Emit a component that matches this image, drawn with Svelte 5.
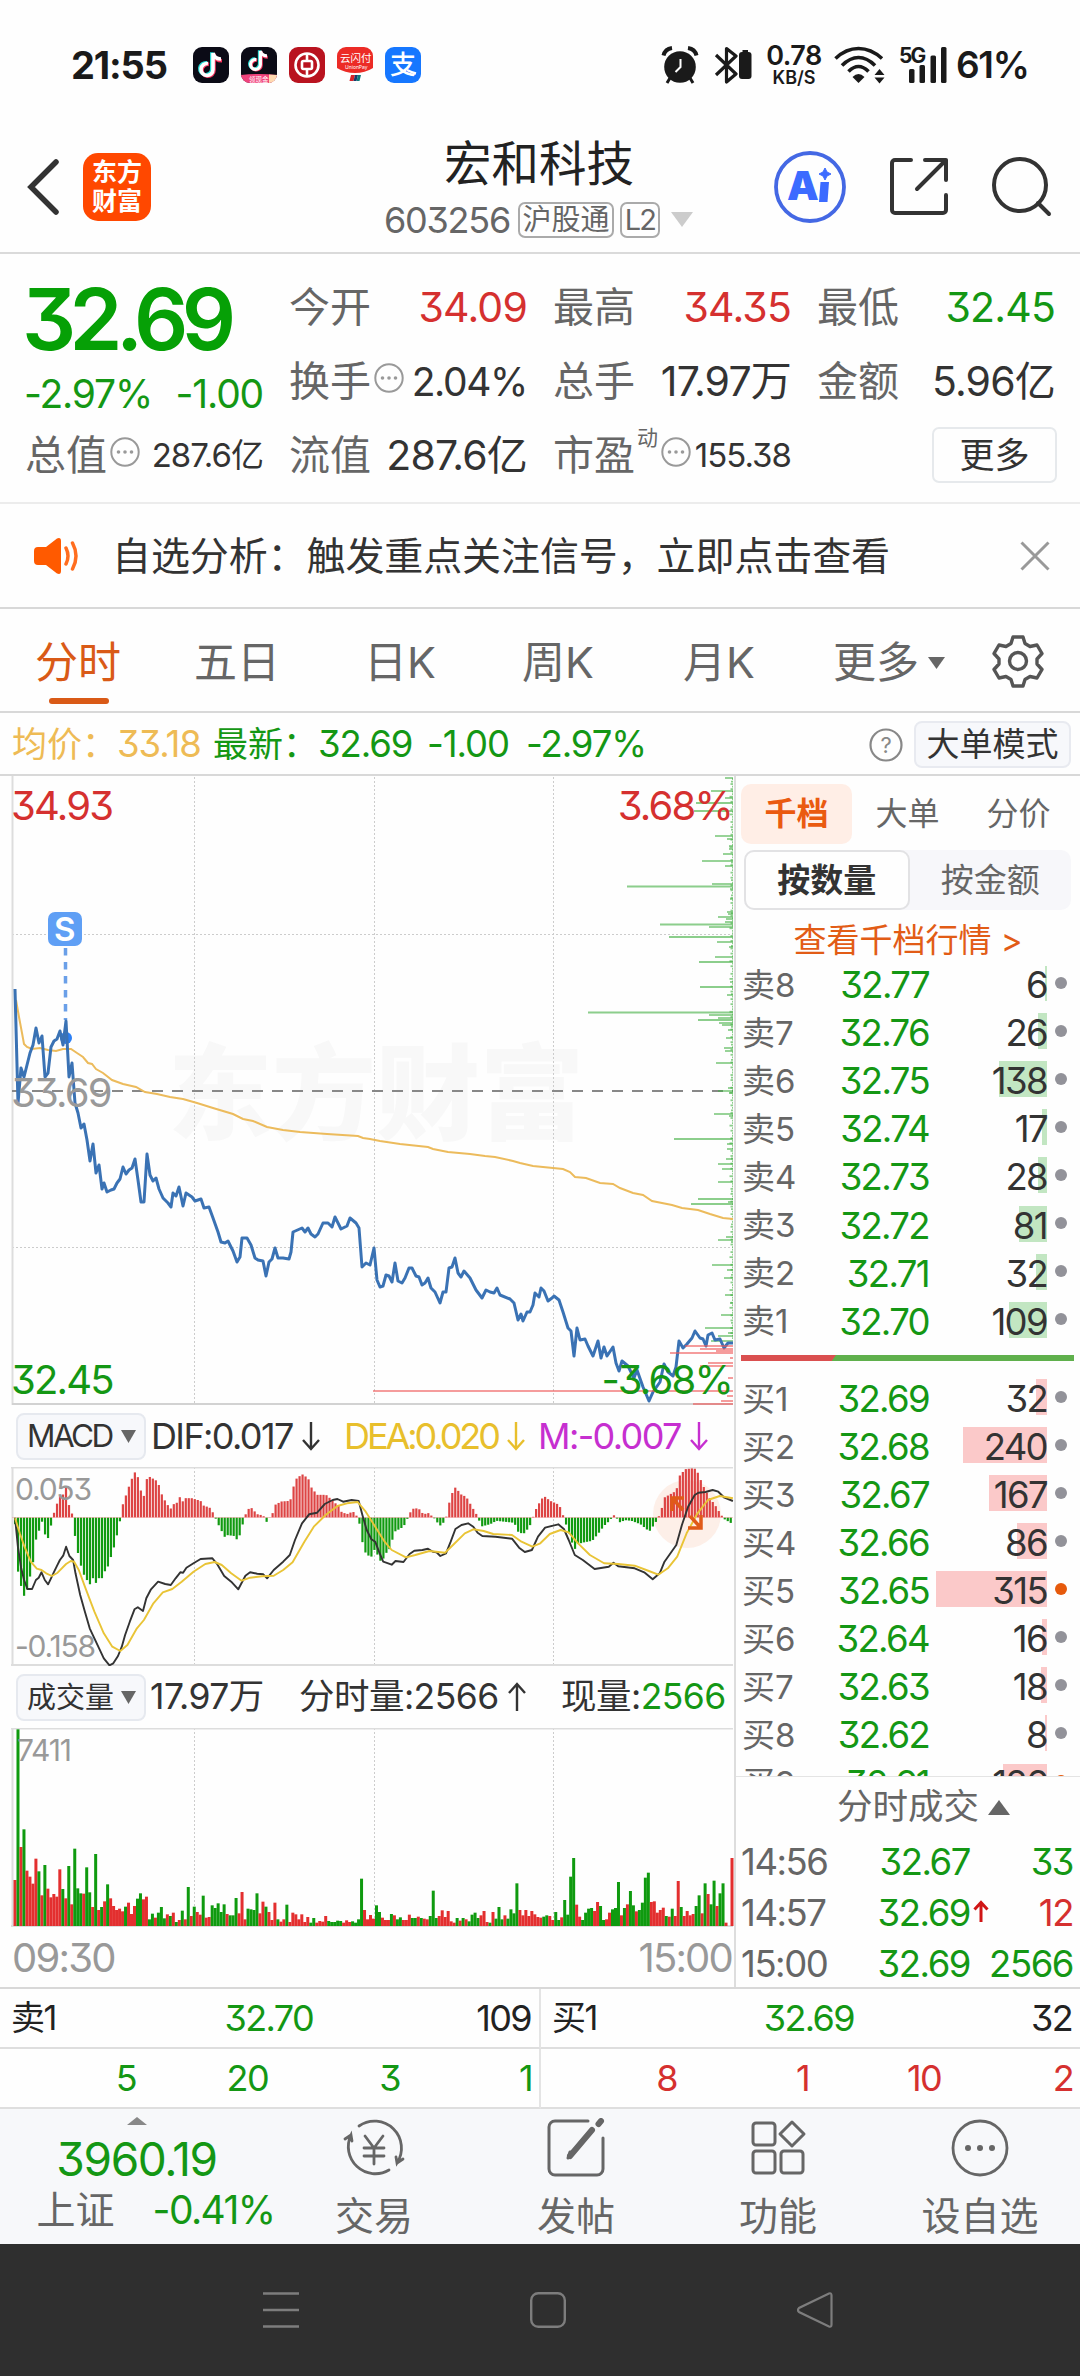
<script>
const quotes = [
    { label: "今开", value: "34.09", tone: "red" },
    { label: "最高", value: "34.35", tone: "red" },
    { label: "最低", value: "32.45", tone: "green" },
    { label: "换手", value: "2.04%", info: true },
    { label: "总手", value: "17.97万" },
    { label: "金额", value: "5.96亿" },
];

const tabs = ["分时", "五日", "日K", "周K", "月K"];

const sells = [
    ["卖8", "32.77", 6, 2],
    ["卖7", "32.76", 26, 9],
    ["卖6", "32.75", 138, 48],
    ["卖5", "32.74", 17, 5],
    ["卖4", "32.73", 28, 9],
    ["卖3", "32.72", 81, 28],
    ["卖2", "32.71", 32, 11],
    ["卖1", "32.70", 109, 38],
];
const buys = [
    ["买1", "32.69", 32, 11],
    ["买2", "32.68", 240, 84],
    ["买3", "32.67", 167, 58],
    ["买4", "32.66", 86, 30],
    ["买5", "32.65", 315, 111],
    ["买6", "32.64", 16, 5],
    ["买7", "32.63", 18, 6],
    ["买8", "32.62", 8, 2],
    ["买9", "32.61", 126, 44],
];
const hot = ["买5", "买9"];

const trades = [
    { time: "14:56", price: "32.67", vol: 33, tone: "green" },
    { time: "14:57", price: "32.69", vol: 12, tone: "red", up: true },
    { time: "15:00", price: "32.69", vol: 2566, tone: "green" },
];

// price and average lines, y runs from 776 (34.93) to 1404 (32.45)
const price = "15,989 18,1103 21,1068 24,1077 27,1065 30,1053 33,1045 36,1028 39,1043 42,1036 45,1077 48,1073 51,1047 54,1041 57,1039 60,1031 63,1045 66,1021 69,1077 72,1063 75,1103 78,1113 81,1128 84,1124 87,1140 90,1161 93,1144 96,1173 99,1165 102,1189 104,1183 107,1192 111,1190 114,1189 117,1183 120,1179 123,1167 126,1174 129,1170 132,1168 135,1159 138,1180 141,1202 144,1202 147,1154 150,1175 153,1181 156,1178 159,1189 163,1198 168,1203 171,1207 173,1193 176,1196 179,1187 183,1206 186,1193 192,1197 195,1201 201,1199 204,1208 209,1207 213,1218 218,1232 221,1242 225,1243 228,1241 233,1251 237,1262 240,1257 242,1238 247,1238 251,1245 255,1258 258,1260 263,1261 266,1276 269,1262 272,1259 275,1248 278,1258 283,1258 289,1259 291,1252 293,1232 302,1228 305,1232 308,1228 311,1234 315,1237 318,1234 323,1223 328,1223 332,1227 335,1217 341,1229 347,1226 350,1218 356,1223 359,1228 362,1267 366,1263 370,1265 374,1248 377,1280 380,1287 383,1286 386,1275 389,1276 392,1282 395,1263 398,1281 402,1283 405,1278 409,1268 412,1268 416,1276 419,1277 422,1285 425,1283 428,1278 431,1288 435,1292 440,1303 443,1292 446,1292 449,1268 452,1267 455,1258 458,1273 461,1277 464,1271 470,1278 476,1290 482,1298 486,1290 490,1292 494,1293 497,1288 500,1295 510,1299 514,1303 518,1320 521,1314 523,1321 527,1312 530,1312 533,1305 535,1293 539,1297 541,1288 544,1291 548,1301 552,1298 554,1296 559,1300 563,1312 568,1328 571,1331 574,1356 577,1328 580,1340 585,1339 588,1346 593,1356 598,1341 601,1358 604,1347 607,1356 613,1347 616,1363 619,1371 622,1361 628,1366 634,1378 637,1370 643,1387 649,1401 653,1392 660,1382 664,1364 668,1372 673,1376 676,1367 679,1341 683,1348 687,1344 692,1338 695,1331 700,1338 703,1339 706,1346 708,1335 712,1333 715,1340 720,1339 724,1348 728,1343 733,1343";
const average = "16,1000 19,1017 22,1033 24,1044 27,1047 32,1049 40,1048 48,1050 56,1051 63,1049 71,1049 77,1053 83,1057 88,1063 92,1064 96,1069 103,1073 112,1080 123,1084 136,1087 145,1092 157,1094 170,1097 183,1099 197,1103 213,1108 233,1114 243,1119 253,1121 267,1127 283,1130 300,1132 327,1134 358,1136 363,1138 370,1139 380,1141 400,1144 428,1147 433,1149 448,1152 470,1154 485,1156 495,1157 513,1161 520,1163 533,1166 563,1169 570,1172 575,1177 586,1178 600,1183 613,1184 620,1188 633,1193 643,1195 652,1201 672,1205 682,1208 698,1210 710,1214 723,1218 733,1219";

// resting orders on the right edge: [y, length]
const asks = [[778,8],[791,22],[798,8],[803,37],[811,39],[836,18],[839,6],[846,4],[849,4],[854,10],[861,31],[866,8],[884,21],[886.5,106],[889,3],[899,3],[912,6],[914,5],[917,15],[919,7],[922,8],[924.5,73],[927,24],[937,64],[942,16],[947,4],[957,18],[962,34],[982,3],[987,33],[995,6],[1012.5,145],[1015,24],[1018,15],[1020,35],[1023,14],[1025,11],[1030,5],[1038,7],[1048,9],[1051,8],[1063,17],[1088,5],[1091,15],[1093,4],[1114,19],[1116,4],[1139,59],[1144,6],[1149,6],[1159,7],[1164,15],[1169,11],[1182,15],[1199,35],[1202,5],[1204,42],[1237,7],[1240,15],[1265,21],[1270,6],[1278,9],[1295,8],[1303,3],[1315,12],[1328,28],[1333,5],[1336,15],[1341,22]];
const bids = [[1346,48],[1349,33],[1351,17],[1353,63],[1358,3],[1363,25],[1366,33],[1378,5],[1391,360],[1396,6],[1401,12],[1404,40]];
const small = Array.from({length: 222}, (_, i) => [779 + i * 2.53, 1 + (i * 7 % 5 > 2 ? 1.5 : 0) + (i * 11 % 13 > 10 ? 1 : 0)]);

// the MACD series sit on a finer grid than the svg
const sx = x => x / 2.119;
const sy = y => y / 3 - 67;
const line = s => s.split(" ").map(p => p.split(",").map(Number)).map(([x, y]) => `${sx(x).toFixed(1)},${sy(y).toFixed(1)}`).join(" ");

const dif = line("32,355 38,440 45,505 51,540 58,567 68,567 76,540 82,533 88,517 95,540 102,553 108,535 114,517 120,500 127,480 134,467 140,440 147,468 155,480 160,520 170,585 180,635 190,685 200,715 210,745 220,775 232,796 240,790 250,768 258,740 265,705 275,665 285,628 292,622 303,633 310,595 320,568 335,545 350,552 362,555 372,535 382,517 388,518 395,503 410,490 425,477 450,475 460,492 475,528 490,545 505,568 520,527 530,517 545,521 558,523 566,535 580,510 600,485 614,465 625,420 640,370 655,343 672,338 688,312 705,300 715,297 727,305 745,300 760,303 768,345 777,390 787,418 795,425 803,455 812,485 830,494 838,483 855,486 868,462 878,452 895,450 907,446 917,455 925,457 933,468 945,460 955,425 965,387 978,375 992,370 1003,380 1012,398 1022,408 1050,410 1085,416 1100,443 1112,456 1127,450 1140,410 1155,383 1183,373 1195,387 1205,420 1218,465 1235,480 1260,507 1290,500 1300,488 1310,499 1345,505 1365,517 1383,538 1398,520 1408,485 1433,435 1445,375 1458,320 1472,285 1480,278 1495,276 1510,270 1522,275 1535,293 1553,303");
const dea = line("32,355 42,400 52,440 65,485 78,506 88,510 98,520 110,528 122,518 140,492 150,483 157,485 167,510 180,560 200,635 220,700 238,740 255,753 270,735 290,685 305,660 325,610 345,577 365,567 385,545 410,515 435,492 455,486 470,495 490,520 512,542 530,533 555,529 580,527 600,510 620,487 645,425 665,380 690,345 715,318 735,310 758,306 775,335 795,380 815,425 830,450 860,472 880,465 910,453 943,458 960,435 985,400 1003,388 1025,393 1045,402 1085,405 1105,425 1128,440 1145,430 1165,402 1188,390 1205,397 1225,430 1250,465 1280,490 1310,492 1345,497 1375,513 1395,524 1415,505 1435,470 1455,400 1478,340 1500,300 1525,288 1553,295");

const macd = [[32,-20],[38,-160],[44,-202],[51,-235],[57,-218],[63,-182],[70,-135],[76,-68],[82,-43],[89,-12],[95,-50],[102,-62],[108,-25],[114,12],[120,38],[127,68],[133,66],[139,100],[146,38],[152,18],[158,-48],[165,-105],[171,-142],[178,-172],[190,-202],[197,-182],[203,-197],[209,-182],[216,-182],[222,-162],[228,-150],[241,-92],[248,-52],[254,-12],[260,38],[273,92],[285,137],[292,122],[298,83],[304,58],[311,115],[317,122],[330,112],[336,100],[342,72],[349,52],[361,25],[368,40],[374,42],[380,63],[387,48],[393,58],[406,58],[425,50],[431,36],[444,30],[450,18],[456,0],[463,-22],[476,-58],[482,-53],[495,-55],[501,-66],[507,-58],[514,-22],[520,8],[526,25],[532,30],[545,10],[558,6],[564,-15],[570,-3],[577,10],[583,38],[596,48],[615,50],[621,88],[627,115],[640,130],[653,118],[659,92],[672,68],[691,68],[704,52],[710,43],[716,40],[722,18],[735,10],[748,18],[754,8],[760,-3],[767,-68],[773,-103],[786,-122],[792,-95],[798,-105],[805,-130],[811,-128],[817,-108],[824,-100],[837,-42],[855,-28],[862,-8],[868,12],[874,26],[887,28],[893,15],[900,10],[906,15],[919,0],[932,-25],[944,-10],[950,35],[957,68],[963,92],[970,82],[976,70],[988,62],[1001,30],[1012,4],[1020,-27],[1039,-20],[1052,-10],[1090,-16],[1097,-42],[1109,-50],[1122,-28],[1128,-5],[1134,20],[1147,55],[1154,63],[1166,50],[1185,38],[1192,12],[1198,-15],[1210,-65],[1217,-98],[1224,-80],[1236,-75],[1255,-70],[1268,-48],[1280,-25],[1293,-8],[1300,8],[1306,0],[1312,-15],[1325,-8],[1338,-10],[1357,-20],[1376,-42],[1388,-18],[1395,0],[1401,20],[1408,60],[1433,80],[1440,125],[1452,145],[1471,148],[1477,140],[1490,95],[1503,60],[1515,38],[1528,8],[1535,-5],[1553,-20]];

function at(x) {
    let k = macd.findIndex(p => p[0] >= x);
    if (k < 1) return macd[0][1];
    const [x0, y0] = macd[k-1];
    const [x1, y1] = macd[k];
    return y0 + (y1-y0) * (x-x0) / (x1-x0);
}
const bars = Array.from({length: 240}, (_, i) => 32 + i * 6.345).map(x => ({x: sx(x), h: at(x) / 3}));

// one entry a minute: colour and height
const volume = "r138 g590 r237 g290 r166 r148 r127 r202 g164 r92 g183 r112 r86 r96 r88 r170 g111 r83 g180 r65 g232 g113 g98 r97 g176 g101 r57 g216 r48 g57 r74 g125 r83 r60 r48 r52 r44 g58 r70 r36 r60 g82 g98 r80 r88 g20 g37 r25 g40 g57 g23 r35 g30 r40 g12 r18 g46 r20 g117 r30 g58 r42 r34 g91 r25 r27 g62 g54 g68 g42 g65 r36 g32 g32 g84 r38 r102 r20 g52 g50 g48 g98 r38 r73 g58 r42 r18 r70 g20 r13 r20 g64 r12 r40 r35 r20 r35 r12 r27 g10 g24 r10 r15 r13 r30 g15 g12 g12 g16 g15 r10 r17 r12 g14 g10 g20 g142 r48 r20 r33 r22 g62 g42 r25 r18 r18 g36 r32 g20 g26 r18 r18 r34 g24 g24 r28 g24 r22 r20 g30 g106 g24 r30 r47 r27 r45 r14 r10 g24 r16 g24 r20 g14 g34 g40 g24 r32 r45 r12 g10 r42 g22 g57 g20 r32 g22 g50 g38 g128 r48 r32 r48 r30 r45 r35 r27 r25 g28 g32 r30 r18 g42 g18 r26 g78 g34 g148 g204 r64 r28 g18 g40 g52 g54 r45 r72 g60 g18 r20 r40 g50 g54 g132 r32 g54 r65 g105 g62 r44 g48 g70 g145 g160 r72 r74 r40 r48 r55 g30 r28 g52 r30 r135 g57 r30 r45 r32 r36 g60 g92 r38 g128 r96 g65 g136 r60 g98 g128 r10 r0 r204"
    .split(" ").map(v => ({up: v[0] === "r", h: +v.slice(1) / 3}));
const step = 717 / (volume.length - 1);
</script>

{#snippet info()}
    <svg class="info" viewBox="0 0 30 30"><circle cx="15" cy="15" r="13.7" fill="none" stroke="#999" stroke-width="2" /><g fill="#999"><circle cx="8.5" cy="15" r="1.8" /><circle cx="15" cy="15" r="1.8" /><circle cx="21.5" cy="15" r="1.8" /></g></svg>
{/snippet}

{#snippet arrow(up, color)}
    <svg class="arrow" viewBox="0 0 20 30" fill="none" stroke={color} stroke-width="2.4">
        <path d={up ? "M10 29V2M2 11l8-9 8 9" : "M10 1v27M2 19l8 9 8-9"} />
    </svg>
{/snippet}

{#snippet note()}
    <path d="M20 6v16.500a6 6 0 1 1-5-5.900" stroke="#25d9d4" transform="translate(-1.200 -.8)" />
    <path d="M20 6v16.500a6 6 0 1 1-5-5.900M20 7c1 4 4 6 8 6" stroke="#f4355e" transform="translate(1 .8)" />
    <path d="M20 6v16.500a6 6 0 1 1-5-5.900M20 6c1 4 4 6 8 6" stroke="#fff" />
{/snippet}

{#snippet book(rows, side)}
    {#each rows as [name, p, n, w]}
        <div class="book-row">
            <span class="book-name">{name}</span>
            <span class="book-price">{p}</span>
            <span class="book-vol"><i class={side} style="width:{w}px"></i><b>{n}</b></span>
            <span class="dot" class:hot={hot.includes(name)}></span>
        </div>
    {/each}
{/snippet}

<div class="app">
    <div class="status">
        <span class="clock">21:55</span>
        <div class="apps">
            <svg viewBox="0 0 36 36"><rect width="36" height="36" rx="9" fill="#0b0b16" /><g fill="none" stroke-width="3.600">{@render note()}</g></svg>
            <svg viewBox="0 0 36 36">
                <rect width="36" height="36" rx="9" fill="#0b0b16" />
                <g fill="none" stroke-width="3.800" transform="translate(3 -1) scale(.82)">{@render note()}</g>
                <path d="M0 28q18-2 36 0a9 9 0 0 1-9 8H9a9 9 0 0 1-9-8z" fill="#f0437c" />
                <path d="M28 27.500l8 .5a9 9 0 0 1-8 8z" fill="#ffd9b0" />
                <text x="8" y="34.500" font-size="6.500" fill="#fff">领现金</text>
            </svg>
            <svg viewBox="0 0 36 36">
                <rect width="36" height="36" rx="9" fill="#b9131f" />
                <g fill="none" stroke="#fff" stroke-width="2.600"><circle cx="18" cy="18" r="11.500" /><rect x="13" y="14" width="10" height="8" rx="1.500" /><path d="M18 7v7M18 22v7" /></g>
            </svg>
            <svg viewBox="0 0 36 36">
                <path d="M9 0h18a9 9 0 0 1 9 9v12q-8 5-18 5T0 21V9a9 9 0 0 1 9-9z" fill="#ec2b26" />
                <text x="3" y="14.500" font-size="10.500" fill="#fff">云闪付</text>
                <text x="8" y="21.500" font-size="5" fill="#fff">UnionPay</text>
                <path d="M14 28h4l-1.500 6h-4z" fill="#d8232a" /><path d="M18 28h3l-1.500 6h-3z" fill="#1a3a6b" /><path d="M21 28h3l-1.500 6h-3z" fill="#0c7a7a" />
            </svg>
            <svg viewBox="0 0 36 36"><rect width="36" height="36" rx="9" fill="#1677ff" /><text x="5" y="27" font-size="26" font-weight="500" fill="#fff">支</text><path d="M22 23q5 2.500 9 3.500" stroke="#fff" stroke-width="2.500" /></svg>
        </div>
        <div class="signals">
            <svg width="38" height="38" viewBox="0 0 38 38" fill="#1a1a1a">
                <circle cx="19" cy="21" r="15.800" />
                <path d="M9 32l-3 5M29 32l3 5" stroke="#1a1a1a" stroke-width="3" />
                <path d="M2.500 9.500Q4 3 11 2M35.500 9.500Q34 3 27 2" fill="none" stroke="#1a1a1a" stroke-width="4" />
                <path d="M19.500 13v8l-5 5" fill="none" stroke="#fff" stroke-width="2" />
            </svg>
            <svg class="bt" width="38" height="38" viewBox="0 0 38 38">
                <path d="M2 9l20 19-9.500 8V2.500L22 10 2 29" fill="none" stroke="#1a1a1a" stroke-width="3.200" stroke-linejoin="round" />
                <rect x="25" y="6" width="12.500" height="27" rx="3" fill="#1a1a1a" /><rect x="28.500" y="4" width="5.500" height="4" fill="#1a1a1a" />
            </svg>
            <div class="speed"><b>0.78</b><small>KB/S</small></div>
            <svg class="wifi" width="51" height="38" viewBox="0 0 51 38" fill="none" stroke="#1a1a1a" stroke-width="3.600">
                <path d="M1.500 12.500Q12 2.500 24.500 2.500T48 12.500M8 19.500Q16 11.500 24.500 11.500T41 19.500M14.500 25.500Q19.500 20.500 24.500 20.500T34.500 25.500" />
                <path d="M18.500 31q6-6 12 0l-6 6z" fill="#1a1a1a" stroke="none" />
                <path d="M40.500 29l5-6 5 6zM40.500 31.500l5 6 5-6z" fill="#1a1a1a" stroke="none" />
            </svg>
            <svg class="cell" width="49" height="40" viewBox="0 0 49 40" fill="#1a1a1a">
                <text x="0" y="18" font-size="21" font-weight="700" letter-spacing="-2">5G</text>
                <rect x="10" y="24" width="5.500" height="14" rx="1.500" /><rect x="20.500" y="20" width="5.500" height="18" rx="1.500" /><rect x="31.500" y="10.500" width="5.500" height="27.500" rx="1.500" /><rect x="42" y="2" width="5.500" height="36" rx="1.500" />
            </svg>
            <span class="battery">61%</span>
        </div>
    </div>

    <header>
        <svg class="back" width="34" height="56" viewBox="0 0 34 56"><path d="M29 3L4 28l25 25" fill="none" stroke="#333" stroke-width="5.500" stroke-linecap="round" /></svg>
        <div class="logo"><span>东方</span><span>财富</span></div>
        <div class="title">
            <h1>宏和科技</h1>
            <div class="code"><span class="num">603256</span><em>沪股通</em><em class="l2">L2</em><svg width="22" height="16" viewBox="0 0 22 16"><path d="M0 0h22L11 15z" fill="#ccc" /></svg></div>
        </div>
        <div class="tools">
            <svg width="72" height="72" viewBox="0 0 72 72">
                <circle cx="36" cy="36" r="34" fill="none" stroke="#4468e4" stroke-width="3.800" />
                <text class="ai" x="13" y="49" font-size="40">A</text>
                <path d="M46.500 31h8.500l-1.500 20h-8.500z" fill="#3c6bff" />
                <path d="M51 17l2 4 4 2-4 2-2 4-2-4-4-2 4-2z" fill="#3c6bff" stroke="#3c6bff" />
            </svg>
            <svg width="60" height="60" viewBox="0 0 60 60" fill="none" stroke="#333" stroke-width="4" stroke-linecap="round" stroke-linejoin="round">
                <path d="M22 3H6a3 3 0 0 0-3 3v47a3 3 0 0 0 3 3h48a3 3 0 0 0 3-3V38M36 3h21v20M57 3L28 32" />
            </svg>
            <svg width="60" height="60" viewBox="0 0 60 60" fill="none" stroke="#333" stroke-width="4" stroke-linecap="round">
                <circle cx="28" cy="28" r="26" /><path d="M46 46l11 11" />
            </svg>
        </div>
    </header>

    <section class="quote">
        <div class="last">
            <div class="big">32.69</div>
            <div class="change"><span>-2.97%</span><span>-1.00</span></div>
        </div>
        {#each quotes as q}
            <div class="cell-q"><label>{q.label}</label>{#if q.info}{@render info()}{/if}<span class="num {q.tone}" class:pct={q.info}>{q.value}</span></div>
        {/each}
        <div class="cell-q"><label>总值</label>{@render info()}<span class="num sm">287.6亿</span></div>
        <div class="cell-q"><label>流值</label><span class="num">287.6亿</span></div>
        <div class="cell-q"><label>市盈</label><sup>动</sup>{@render info()}<span class="num sm">155.38</span></div>
        <div class="cell-q"><button class="more">更多</button></div>
    </section>

    <section class="notice">
        <svg width="46" height="40" viewBox="0 0 46 40">
            <path d="M4 11h8L23 2.500Q27 1 27 5v30q0 4-4 2.500L12 29H4q-4 0-4-4V15q0-4 4-4z" fill="#ff5a00" />
            <path d="M32 12q4 8 0 16M38.500 7q7 13 0 26" fill="none" stroke="#ff6d1f" stroke-width="3.500" stroke-linecap="round" />
        </svg>
        <p>自选分析：触发重点关注信号，立即点击查看</p>
        <svg width="30" height="30" viewBox="0 0 30 30"><path d="M1.500 1.500l27 27M28.500 1.500l-27 27" stroke="#999" stroke-width="3" /></svg>
    </section>

    <nav class="tabs">
        {#each tabs as tab, i}
            <span class:active={i === 0}>{tab}</span>
        {/each}
        <span class="drop">更多<svg width="17" height="12" viewBox="0 0 17 12"><path d="M0 0h17L8.500 12z" fill="#666" /></svg></span>
        <svg class="gear" width="54" height="54" viewBox="0 0 54 54" fill="none" stroke="#555" stroke-width="3.400" stroke-linejoin="round">
            <path d="M22 3h10l2 6.500 5 3 7-1.500 5 8.500-5 5.500v5l5 5.500-5 8.500-7-1.500-5 3-2 6.500H22l-2-6.500-5-3-7 1.500-5-8.500 5-5.500v-5l-5-5.500L8 11l7 1.500 5-3z" />
            <circle cx="27" cy="27" r="8.500" />
        </svg>
    </nav>

    <div class="summary">
        <span class="avg">均价：</span><span class="num avg v1">33.18</span>
        <span class="green">最新：</span><span class="num green v2">32.69</span><span class="num green v3">-1.00</span><span class="num green">-2.97%</span>
        <svg class="help" width="34" height="34" viewBox="0 0 34 34"><circle cx="17" cy="17" r="15.500" fill="none" stroke="#888" stroke-width="2.200" /><text x="11.500" y="25" font-size="22" fill="#888">?</text></svg>
        <button class="mode">大单模式</button>
    </div>

    <main>
        <div class="charts">
            <svg class="plot" width="734" height="629" viewBox="0 776 734 629">
                <text class="mark" x="168" y="1132">东方财富</text>
                <g class="grid">
                    <path d="M194.500 777V1404M374.500 777V1404M553.500 777V1404M12 934.500H733M12 1247.500H733" />
                </g>
                <path d="M12.500 776V1405" stroke="#ddd" stroke-width="2" />
                <path d="M12 1404H733" stroke="#d2d2d2" stroke-width="2" />
                <path d="M12 1091H733" stroke="#888" stroke-width="2" stroke-dasharray="11 9" />
                {#each [...asks, ...small] as [y, w]}
                    <path d="M{733 - w} {y}H733" stroke="#3fae3f" stroke-opacity=".6" stroke-width="1.800" />
                {/each}
                <polyline points={average} fill="none" stroke="#ecbb5c" stroke-width="2" />
                <path d="M65.500 948V1020" stroke="#6a9fe8" stroke-width="3.500" stroke-dasharray="7.500 6.500" />
                <circle cx="66" cy="1038" r="6" fill="#2b7ff5" />
                <polyline points={price} fill="none" stroke="#3a72b4" stroke-width="3" stroke-linejoin="round" />
                {#each bids as [y, w]}
                    <path d="M{733 - w} {y}H733" stroke="#ee5a5a" stroke-opacity=".6" stroke-width="2" />
                {/each}
                <rect x="48" y="912" width="34" height="34" rx="7" fill="#5f9ff5" />
                <text x="54" y="941" font-size="33" font-weight="600" fill="#fff">S</text>
                <text class="lbl red" x="11" y="820">34.93</text>
                <text class="lbl red" x="732" y="820" text-anchor="end">3.68%</text>
                <text class="lbl grey" x="11" y="1107">33.69</text>
                <text class="lbl green" x="11" y="1394">32.45</text>
                <text class="lbl green" x="732" y="1394" text-anchor="end">-3.68%</text>
            </svg>

            <div class="ind macd">
                <button>MACD<svg width="15" height="13" viewBox="0 0 15 13"><path d="M0 0h15L7.500 13z" fill="#666" /></svg></button>
                <span>DIF:0.017{@render arrow(false, "#333")}</span>
                <span class="y">DEA:0.020{@render arrow(false, "#e8bf2c")}</span>
                <span class="m">M:-0.007{@render arrow(false, "#c62fd0")}</span>
            </div>
            <svg class="plot" width="734" height="199" viewBox="0 0 734 199">
                <path class="grid" d="M194.500 0V198M374.500 0V198M553.500 0V198" />
                <path d="M11 .5H733M11 198H733" stroke="#ddd" stroke-width="2" /><path d="M12.500 0V199" stroke="#ddd" stroke-width="2" />
                <circle cx="687" cy="47" r="34" fill="#fdefe8" />
                {#each bars as b}
                    <rect x={b.x - 1.1} y={b.h > 0 ? 50.5 - b.h : 50.5} width="2.200" height={Math.abs(b.h)} fill={b.h > 0 ? "#dd4444" : "#119a11"} />
                {/each}
                <path d="M12 50.500H733" stroke="#f19a9a" stroke-opacity=".5" />
                <text class="axis" x="15" y="33">0.053</text>
                <text class="axis" x="15" y="190">-0.158</text>
                <polyline points={dif} fill="none" stroke="#333" stroke-width="1.900" stroke-linejoin="round" />
                <polyline points={dea} fill="none" stroke="#e9c436" stroke-width="1.900" stroke-linejoin="round" />
                <path d="M683 43L672 31M672 44V31h12M690 49l11 12M701 48v13h-13" fill="none" stroke="#e05a18" stroke-width="3.500" />
            </svg>

            <div class="ind vol">
                <button>成交量<svg width="15" height="13" viewBox="0 0 15 13"><path d="M0 0h15L7.500 13z" fill="#666" /></svg></button>
                <span>17.97万</span>
                <span>分时量:2566{@render arrow(true, "#333")}</span>
                <span>现量:<i class="green">2566</i></span>
            </div>
            <svg class="plot" width="734" height="199" viewBox="0 0 734 199">
                <path class="grid" d="M194.500 0V198M374.500 0V198M553.500 0V198" />
                <path d="M11 .5H733M11 198H733" stroke="#ddd" stroke-width="2" /><path d="M12.500 0V199" stroke="#ddd" stroke-width="2" />
                {#each volume as v, i}
                    <rect x={13.500 + i * step} y={198 - v.h} width="3" height={v.h} fill={v.up ? "#e32f2f" : "#0f9a0f"} />
                {/each}
                <text class="axis" x="17" y="33">7411</text>
            </svg>
            <div class="times"><span>09:30</span><span>15:00</span></div>
        </div>

        <aside>
            <div class="kinds"><span class="on">千档</span><span>大单</span><span>分价</span></div>
            <div class="switch"><span class="on">按数量</span><span>按金额</span></div>
            <div class="link">查看千档行情 &gt;</div>
            <div class="book sell">{@render book(sells, "ask")}</div>
            <div class="ratio"></div>
            <div class="book buy">{@render book(buys, "bid")}</div>
            <div class="deals">分时成交<svg width="22" height="16" viewBox="0 0 22 16"><path d="M11 1l11 15H0z" fill="#666" /></svg></div>
            {#each trades as t}
                <div class="deal"><span>{t.time}</span><span class="green">{t.price}{#if t.up}<svg width="16" height="22" viewBox="0 0 16 22"><path d="M8 22V3M1.500 9.500L8 2.500l6.500 7" fill="none" stroke="#d01515" stroke-width="3" /></svg>{/if}</span><span class={t.tone}>{t.vol}</span></div>
            {/each}
        </aside>
    </main>

    <div class="level">
        <div class="side"><span>卖1</span><span class="green">32.70</span><span>109</span></div>
        <div class="side"><span>买1</span><span class="green">32.69</span><span>32</span></div>
        <div class="queue green"><span>5</span><span>20</span><span>3</span><span>1</span></div>
        <div class="queue red"><span>8</span><span>1</span><span>10</span><span>2</span></div>
    </div>

    <footer>
        <div class="index">
            <svg width="20" height="8" viewBox="0 0 20 8"><path d="M10 0l10 8H0z" fill="#888" /></svg>
            <div class="point">3960.19</div>
            <div class="row"><span>上证</span><span class="green">-0.41%</span></div>
        </div>
        <div class="item">
            <svg width="66" height="60" viewBox="0 0 66 60" fill="none" stroke="#666" stroke-width="2.800" stroke-linecap="round">
                <path d="M18 8a27 27 0 0 1 38 37l-1-6M56 45l6-4M48 52A27 27 0 0 1 10 17l1 6M10 17l-6 4" />
                <path d="M24 18l9 12 9-12M33 30v16M23 30h20M23 38h20" />
            </svg>交易
        </div>
        <div class="item">
            <svg width="60" height="60" viewBox="0 0 60 60" fill="none" stroke="#666" stroke-width="3" stroke-linecap="round">
                <path d="M42 3H9a6 6 0 0 0-6 6v42a6 6 0 0 0 6 6h42a6 6 0 0 0 6-6V20" />
                <path d="M46 12L24 38M52.500 6l2.500-3" stroke-width="6" /><path d="M22 40l2-6" stroke-width="3" />
            </svg>发帖
        </div>
        <div class="item">
            <svg width="60" height="60" viewBox="0 0 60 60" fill="none" stroke="#666" stroke-width="3">
                <rect x="5" y="5" width="22" height="22" rx="3" /><rect x="5" y="33" width="22" height="22" rx="3" /><rect x="33" y="33" width="22" height="22" rx="3" />
                <path d="M44 4l12 12-12 12-12-12z" stroke-linejoin="round" />
            </svg>功能
        </div>
        <div class="item">
            <svg width="60" height="60" viewBox="0 0 60 60"><circle cx="30" cy="30" r="27" fill="none" stroke="#666" stroke-width="2.800" /><g fill="#666"><circle cx="18" cy="30" r="3" /><circle cx="30" cy="30" r="3" /><circle cx="42" cy="30" r="3" /></g></svg>设自选
        </div>
    </footer>

    <div class="system">
        <svg width="36" height="36" viewBox="0 0 36 36"><path d="M0 1.500h36M0 18h36M0 34.500h36" stroke="#7d7d7d" stroke-width="2.500" /></svg>
        <svg width="36" height="36" viewBox="0 0 36 36"><rect x="1.200" y="1.200" width="33.600" height="33.600" rx="7" fill="none" stroke="#7d7d7d" stroke-width="2.400" /></svg>
        <svg width="36" height="36" viewBox="0 0 36 36"><path d="M32 1.500q2.500-1 2.500 2v29q0 3-2.500 2L2 20q-2-2 0-4z" fill="none" stroke="#7d7d7d" stroke-width="2.200" /></svg>
    </div>
</div>

<style>
:global(body) {
    background: #fefefe;
}
.app {
    width: 1080px;
    height: 2376px;
    overflow: hidden;
    background: #fefefe;
    color: #333;
    font-family: Inter, "Noto Sans CJK SC", sans-serif;
    font-feature-settings: "cv09";
    line-height: 1;
}
.app * {
    box-sizing: border-box;
}
svg {
    display: block;
    flex-shrink: 0;
}
button {
    font: inherit;
    color: inherit;
    padding: 0;
    white-space: nowrap;
}
i, em {
    font-style: normal;
}
.num {
    letter-spacing: -0.02em;
}
.red {
    color: #d5302f;
    fill: #d5302f;
}
.green {
    color: #149714;
    fill: #149714;
}

.status {
    display: flex;
    height: 129px;
    padding: 0 49px 0 71px;
    align-items: center;
    color: #1a1a1a;
}
.clock {
    width: 122px;
    font-size: 38px;
    font-weight: 700;
    letter-spacing: -0.03em;
}
.apps {
    display: flex;
    gap: 12px;
}
.apps svg {
    width: 36px;
    height: 36px;
}
.signals {
    display: flex;
    align-items: center;
    margin-left: auto;
}
.bt {
    margin-left: 15px;
}
.speed {
    display: flex;
    flex-direction: column;
    align-items: center;
    width: 56px;
    margin-left: 14px;
    gap: 4px;
}
.speed b {
    font-size: 27px;
    line-height: 23px;
    font-weight: 600;
    letter-spacing: -0.02em;
}
.speed small {
    font-size: 18px;
    line-height: 14px;
    font-weight: 600;
}
.wifi {
    margin-left: 12px;
}
.cell {
    margin-left: 14px;
}
.battery {
    width: 75px;
    margin-left: 8px;
    font-size: 37px;
    font-weight: 600;
    letter-spacing: -0.035em;
}

header {
    display: flex;
    position: relative;
    height: 125px;
    padding: 0 28px 8px 27px;
    align-items: center;
    border-bottom: 2px solid #dadada;
}
.logo {
    display: flex;
    flex-direction: column;
    justify-content: center;
    width: 68px;
    height: 68px;
    margin-left: 22px;
    border-radius: 15px;
    background: #ff4800;
    color: #fff;
    font-size: 25px;
    font-weight: 700;
    line-height: 29px;
    text-align: center;
}
.title {
    width: 310px;
    margin-left: 233px;
}
h1 {
    margin: 0 0 10px;
    font-size: 47.500px;
    line-height: 56px;
    font-weight: 400;
    color: #222;
    text-align: center;
}
.code {
    display: flex;
    align-items: center;
    font-size: 36px;
    color: #666;
}
.code .num {
    width: 134px;
    letter-spacing: -0.035em;
}
.code em {
    width: 96px;
    height: 36px;
    margin-right: 6px;
    border: 2px solid #aaa;
    border-radius: 7px;
    font-size: 29px;
    line-height: 31px;
    text-align: center;
}
.code .l2 {
    width: 40px;
    margin-right: 11px;
    letter-spacing: -0.06em;
}
.tools {
    display: flex;
    align-items: center;
    gap: 43px;
    margin-left: auto;
}
.ai {
    fill: #3c6bff;
    font-weight: 900;
}

.quote {
    display: grid;
    grid-template-columns: repeat(4, 238px);
    grid-template-rows: repeat(3, 74px);
    column-gap: 26px;
    height: 250px;
    padding: 16px 25px 0;
    border-bottom: 2px solid #ececec;
    font-size: 41px;
}
.last {
    grid-row: span 2;
    color: #06a006;
}
.big {
    margin-left: -3px;
    font-size: 85px;
    line-height: 99px;
    font-weight: 600;
    letter-spacing: -0.078em;
}
.change {
    display: flex;
    justify-content: space-between;
    margin-left: -1px;
    font-size: 39px;
    line-height: 50px;
    letter-spacing: -0.03em;
    color: #149714;
}
.cell-q {
    display: flex;
    align-items: center;
    white-space: nowrap;
}
.cell-q label {
    color: #666;
}
.cell-q .num {
    margin-left: auto;
}
.cell-q .pct {
    font-size: 39px;
    letter-spacing: -0.035em;
}
.cell-q .sm {
    font-size: 33px;
    letter-spacing: -0.03em;
}
.cell-q sup {
    align-self: flex-start;
    margin: 9px 0 0 2px;
    font-size: 21px;
    color: #666;
}
.info {
    width: 30px;
    height: 30px;
    margin-left: 3px;
    margin-top: -6px;
}
.more {
    width: 125px;
    height: 56px;
    margin: 0 -2px 0 auto;
    border: 2px solid #e6e9ec;
    border-radius: 7px;
    background: #fefefe;
    font-size: 35px;
}

.notice {
    display: flex;
    align-items: center;
    height: 105px;
    padding: 0 30px 0 34px;
    border-bottom: 2px solid #d8d8d8;
}
.notice p {
    flex: 1;
    margin: 0 0 0 32px;
    font-size: 39px;
    letter-spacing: -0.1px;
}

.tabs {
    display: grid;
    grid-template-columns: 159px 170px 158px 161px 150px 158px 60px;
    align-items: center;
    height: 104px;
    padding: 5px 0 0 35px;
    border-bottom: 2px solid #d8d8d8;
    font-size: 43px;
    color: #666;
}
.tabs .active {
    position: relative;
    width: 86px;
    color: #d95a17;
}
.tabs .active::after {
    content: "";
    position: absolute;
    left: 14px;
    bottom: -20px;
    width: 60px;
    height: 6px;
    border-radius: 3px;
    background: #d95a17;
}
.gear {
    margin-top: -4px;
}
.drop {
    display: flex;
    align-items: center;
    gap: 9px;
}

.summary {
    display: flex;
    align-items: center;
    height: 63px;
    padding: 2px 9px 0 12px;
    border-bottom: 2px solid #d8d8d8;
    font-size: 35px;
    white-space: nowrap;
}
.summary .num {
    font-size: 36.500px;
    letter-spacing: -0.03em;
}
.avg {
    color: #eebb55;
}
.v1 {
    width: 96px;
}
.v2 {
    width: 109px;
}
.v3 {
    width: 99px;
}
.help {
    margin-left: auto;
}
.mode {
    width: 157px;
    height: 47px;
    margin-left: 11px;
    border: 2px solid #e8eaf0;
    border-radius: 8px;
    background: #f7f8fb;
    font-size: 33px;
}

main {
    display: flex;
    height: 1211px;
}
.charts {
    width: 736px;
    border-right: 2px solid #ddd;
}
.mark {
    font-size: 104px;
    font-weight: 900;
    fill: #f8f8f8;
}
.grid {
    fill: none;
    stroke: #ccc;
    stroke-width: 1;
    stroke-dasharray: 2 2;
}
.lbl {
    font-size: 40px;
    letter-spacing: -0.045em;
}
.grey {
    fill: #999;
}
.axis {
    font-size: 30px;
    letter-spacing: -0.04em;
    fill: #999;
}
.ind {
    display: grid;
    align-items: center;
    height: 62px;
    padding-left: 16px;
    font-size: 36px;
    letter-spacing: -0.045em;
    white-space: nowrap;
}
.ind span {
    display: flex;
    align-items: center;
}
.macd {
    grid-template-columns: 135px 193px 194px 190px;
}
.vol {
    grid-template-columns: 134px 149px 262px 160px;
    font-size: 35.500px;
    letter-spacing: -0.015em;
}
.ind button {
    display: flex;
    align-items: center;
    justify-content: space-between;
    width: 130px;
    height: 47px;
    padding: 0 8px 0 9px;
    border: 2px solid #e6e9ef;
    border-radius: 8px;
    background: #f7f8fb;
    font-size: 31.500px;
    letter-spacing: -0.08em;
}
.vol button {
    font-size: 29px;
    letter-spacing: 0;
}
.arrow {
    width: 20px;
    height: 30px;
    margin-left: 8px;
}
.macd .y {
    color: #e8bf2c;
    letter-spacing: -0.085em;
}
.m {
    color: #c62fd0;
}
.times {
    display: flex;
    justify-content: space-between;
    padding: 0 2px 0 12px;
    font-size: 40px;
    line-height: 61px;
    letter-spacing: -0.045em;
    color: #999;
}

aside {
    width: 344px;
    letter-spacing: 0;
}
.kinds {
    display: flex;
    padding: 8px 5px 0;
}
.kinds span {
    width: 111px;
    border-radius: 10px;
    font-size: 32px;
    line-height: 60px;
    text-align: center;
    color: #666;
}
.kinds .on {
    background: #ffeee6;
    color: #ea5a10;
    font-weight: 700;
}
.switch {
    display: flex;
    width: 327px;
    height: 60px;
    margin: 6px 0 0 8px;
    border-radius: 10px;
    background: #f7f7fa;
}
.switch span {
    flex: 1;
    font-size: 33px;
    line-height: 60px;
    text-align: center;
    color: #666;
}
.switch .on {
    border: 2px solid #e2e2e4;
    border-radius: 10px;
    background: #fefefe;
    line-height: 56px;
    font-weight: 700;
    color: #333;
}
.link {
    height: 56px;
    font-size: 33px;
    line-height: 61px;
    text-align: center;
    color: #e25c16;
}
.book {
    display: flex;
    flex-direction: column;
    overflow: hidden;
}
.sell {
    height: 380px;
    justify-content: flex-end;
}
.buy {
    height: 402px;
    margin-top: 14px;
    border-bottom: 1px solid #e4e4e4;
}
.book-row {
    display: flex;
    align-items: center;
    flex-shrink: 0;
    height: 48.100px;
    padding-left: 6px;
    font-size: 36.500px;
    letter-spacing: -0.045em;
}
.book-name {
    width: 75px;
    font-size: 33px;
    letter-spacing: 0;
    color: #666;
    white-space: nowrap;
}
.book-price {
    width: 112px;
    text-align: right;
    color: #149714;
}
.book-vol {
    position: relative;
    width: 118px;
    text-align: right;
}
.book-vol b {
    position: relative;
    font-weight: 400;
}
.book-vol i {
    position: absolute;
    right: 0;
    top: -2px;
    height: 36px;
}
.ask {
    background: #c2e6c2;
}
.bid {
    background: #fbc9c9;
}
.dot {
    width: 12px;
    height: 12px;
    margin: -5px 0 0 8px;
    border-radius: 50%;
    background: #929299;
}
.hot {
    background: #e65a0c;
}
.ratio {
    width: 333px;
    height: 6px;
    margin: 9px 0 0 5px;
    background: linear-gradient(125deg, #da4f4f 28%, #5fb04c 28.300%);
}
.deals {
    display: flex;
    align-items: center;
    gap: 9px;
    height: 60px;
    padding-left: 101px;
    font-size: 35.500px;
    color: #666;
}
.deal {
    display: grid;
    grid-template-columns: 90px 139px 103px;
    align-items: center;
    height: 51px;
    padding-left: 5px;
    font-size: 36.500px;
    letter-spacing: -0.04em;
    color: #666;
}
.deal span {
    position: relative;
    text-align: right;
}
.deal span:first-child {
    text-align: left;
}
.deal svg {
    position: absolute;
    right: -19px;
    top: 5px;
}
.deal .green {
    color: #149714;
}
.deal .red {
    color: #d5302f;
}

.level {
    display: grid;
    grid-template-columns: 541px 539px;
    grid-template-rows: 60px 60px;
    border-top: 2px solid #d8d8d8;
    font-size: 36px;
    letter-spacing: -0.045em;
}
.level > div {
    display: grid;
    align-items: center;
    border-bottom: 2px solid #dedede;
}
.level > div:nth-child(odd) {
    border-right: 2px solid #e4e4e4;
}
.side {
    grid-template-columns: 100px 202px 218px;
    padding-left: 11px;
    color: #222;
}
.side span {
    text-align: right;
    white-space: nowrap;
}
.side span:first-child {
    text-align: left;
    font-size: 34px;
}
.queue {
    grid-template-columns: repeat(4, 132px);
    padding-left: 4px;
    text-align: right;
}

footer {
    display: grid;
    grid-template-columns: 273px repeat(4, 202px);
    height: 135px;
    background: #f7f8fa;
    color: #666;
}
.index {
    display: flex;
    flex-direction: column;
    align-items: center;
    padding-top: 8px;
}
.point {
    margin-top: 8px;
    font-size: 46px;
    line-height: 52px;
    letter-spacing: -0.03em;
    color: #149714;
}
.row {
    display: flex;
    align-items: center;
    gap: 38px;
    margin-left: 38px;
    font-size: 39px;
    line-height: 50px;
    white-space: nowrap;
}
.row .green {
    letter-spacing: -0.04em;
}
.item {
    display: flex;
    flex-direction: column;
    align-items: center;
    padding-top: 9px;
    font-size: 39px;
    line-height: 75px;
}

.system {
    display: flex;
    height: 132px;
    padding-left: 263px;
    gap: 231px;
    align-items: center;
    background: #2f2f2f;
}
</style>
